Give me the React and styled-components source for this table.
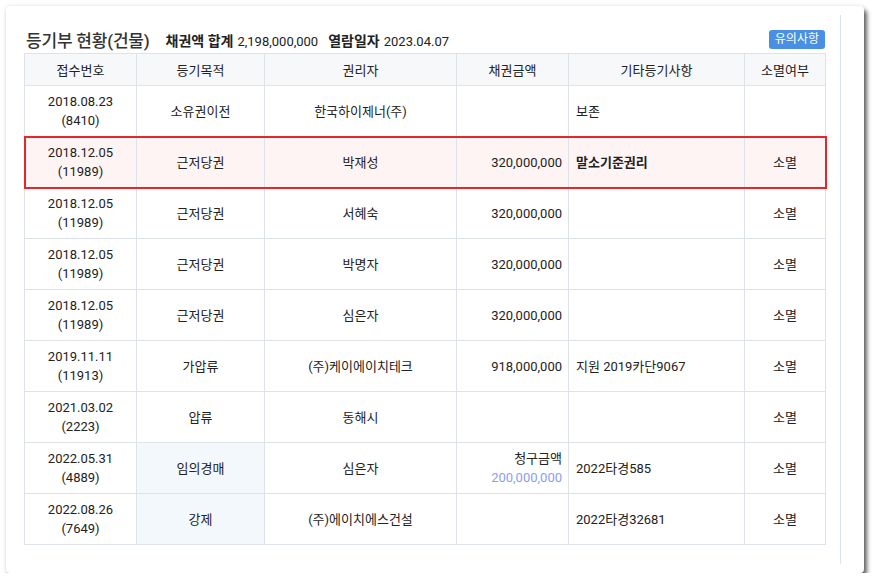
import styled, { createGlobalStyle } from "styled-components";

const GlobalStyle = createGlobalStyle`
  html, body {
    margin: 0;
    padding: 0;
    background: #ffffff;
  }
  body {
    font-family: Roboto, "Noto Sans CJK KR", "Noto Sans", sans-serif;
    color: #222;
  }
`;

const Card = styled.div`
  margin: 6px 0 0 6px;
  width: 858px;
  height: 567px;
  box-sizing: border-box;
  background: #fff;
  border-radius: 4px;
  box-shadow: 3px 4px 4px rgba(0, 0, 0, 0.6), 0 0 4px rgba(0, 0, 0, 0.12);
  padding: 9px 23px 9px 0;
`;

const Panel = styled.div`
  height: 100%;
  box-sizing: border-box;
  border-right: 1px solid #dde3ea;
  padding: 13px 15px 0 18px;
`;

const HeaderRow = styled.div`
  display: flex;
  align-items: center;
  height: 23px;
  margin-bottom: 2px;
`;

const Title = styled.h2`
  margin: 0 16px 0 2px;
  font-size: 17px;
  font-weight: 500;
  color: #333;
  letter-spacing: -0.2px;
`;

const Meta = styled.span`
  font-size: 13px;
  color: #222;
  margin-right: 10px;
  b {
    font-size: 14px;
    font-weight: 700;
    margin-right: 4px;
  }
`;

const Badge = styled.span`
  margin-left: auto;
  background: #4a90e2;
  color: #fff;
  font-size: 12px;
  line-height: 19px;
  padding: 0 6px;
  border-radius: 3px;
`;

const Table = styled.table`
  width: 801px;
  border-collapse: collapse;
  table-layout: fixed;
  font-size: 13px;
  color: #222;
`;

const Th = styled.th`
  height: 31px;
  padding: 0;
  background: #f7f8fa;
  border: 1px solid #dee3ea;
  font-weight: 400;
  text-align: center;
`;

const Row = styled.tr`
  background: ${(p) => (p.$highlight ? "#fff4f4" : "#fff")};
  outline: ${(p) => (p.$highlight ? "2px solid #e8252b" : "none")};
  outline-offset: -1px;
`;

const Td = styled.td`
  height: 50px;
  padding: 0 ${(p) => (p.$align === "center" ? "0" : "6px")};
  border: 1px solid #dee3ea;
  text-align: ${(p) => p.$align || "center"};
  line-height: 19px;
  background: ${(p) => (p.$tint ? "#f3f8fd" : "transparent")};
  font-weight: ${(p) => (p.$bold ? 700 : 400)};
  padding-left: ${(p) => (p.$align === "left" ? "7px" : undefined)};
`;

const Claim = styled.span`
  display: block;
  color: #8a9ef2;
`;

const columns = [
  { label: "접수번호", width: 112 },
  { label: "등기목적", width: 128 },
  { label: "권리자", width: 192 },
  { label: "채권금액", width: 112 },
  { label: "기타등기사항", width: 176 },
  { label: "소멸여부", width: 81 },
];

const rows = [
  { date: "2018.08.23", no: "8410", purpose: "소유권이전", holder: "한국하이제너(주)", amount: "", note: "보존", gone: "" },
  { date: "2018.12.05", no: "11989", purpose: "근저당권", holder: "박재성", amount: "320,000,000", note: "말소기준권리", gone: "소멸", highlight: true },
  { date: "2018.12.05", no: "11989", purpose: "근저당권", holder: "서혜숙", amount: "320,000,000", note: "", gone: "소멸" },
  { date: "2018.12.05", no: "11989", purpose: "근저당권", holder: "박명자", amount: "320,000,000", note: "", gone: "소멸" },
  { date: "2018.12.05", no: "11989", purpose: "근저당권", holder: "심은자", amount: "320,000,000", note: "", gone: "소멸" },
  { date: "2019.11.11", no: "11913", purpose: "가압류", holder: "(주)케이에이치테크", amount: "918,000,000", note: "지원 2019카단9067", gone: "소멸" },
  { date: "2021.03.02", no: "2223", purpose: "압류", holder: "동해시", amount: "", note: "", gone: "소멸" },
  { date: "2022.05.31", no: "4889", purpose: "임의경매", holder: "심은자", claim: "200,000,000", note: "2022타경585", gone: "소멸", tint: true },
  { date: "2022.08.26", no: "7649", purpose: "강제", holder: "(주)에이치에스건설", amount: "", note: "2022타경32681", gone: "소멸", tint: true },
];

export default function App() {
  return (
    <>
      <GlobalStyle />
      <Card>
        <Panel>
          <HeaderRow>
            <Title>등기부 현황(건물)</Title>
            <Meta>
              <b>채권액 합계</b>2,198,000,000
            </Meta>
            <Meta>
              <b>열람일자</b>2023.04.07
            </Meta>
            <Badge>유의사항</Badge>
          </HeaderRow>
          <Table>
            <colgroup>
              {columns.map((c) => (
                <col key={c.label} style={{ width: c.width }} />
              ))}
            </colgroup>
            <thead>
              <tr>
                {columns.map((c) => (
                  <Th key={c.label}>{c.label}</Th>
                ))}
              </tr>
            </thead>
            <tbody>
              {rows.map((r, i) => (
                <Row key={i} $highlight={r.highlight}>
                  <Td>
                    {r.date}
                    <br />({r.no})
                  </Td>
                  <Td $tint={r.tint}>{r.purpose}</Td>
                  <Td>{r.holder}</Td>
                  <Td $align="right">
                    {r.claim ? (
                      <>
                        청구금액
                        <Claim>{r.claim}</Claim>
                      </>
                    ) : (
                      r.amount
                    )}
                  </Td>
                  <Td $align="left" $bold={r.highlight}>
                    {r.note}
                  </Td>
                  <Td>{r.gone}</Td>
                </Row>
              ))}
            </tbody>
          </Table>
        </Panel>
      </Card>
    </>
  );
}
